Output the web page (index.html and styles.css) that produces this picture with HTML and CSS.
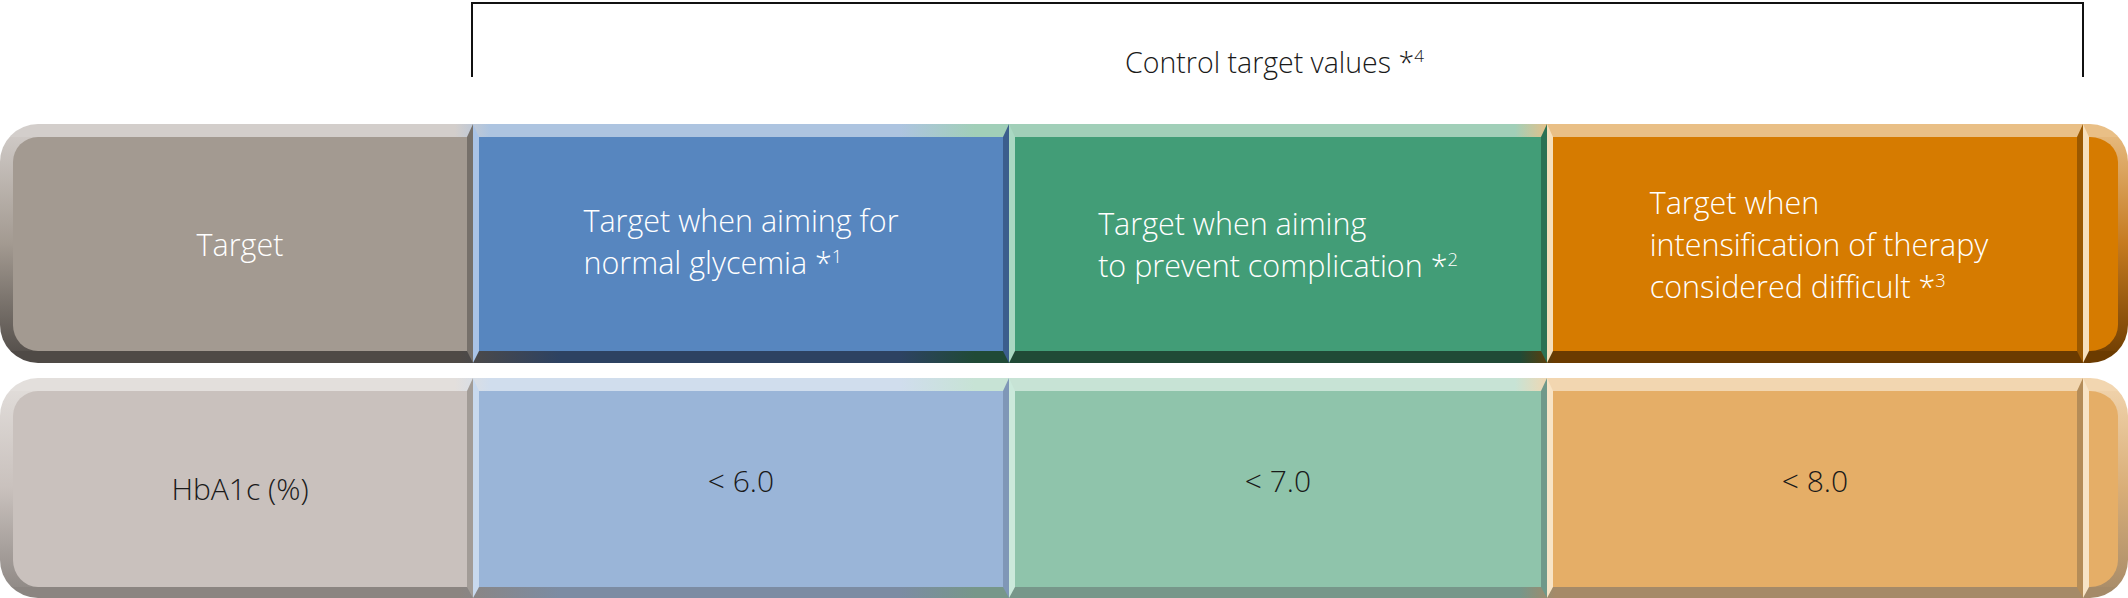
FILE: index.html
```html
<!DOCTYPE html>
<html>
<head>
<meta charset="utf-8">
<link rel="stylesheet" href="styles.css">
</head>
<body>
<div class="page">
  <div class="bracket"><div class="bracket-label">Control target values *<sup>4</sup></div></div>
  <div class="bar bar-top">
    <div class="cell first gray"><div class="label">Target</div></div>
    <div class="cell blue"><div class="label up">Target when aiming for<br>normal glycemia *<sup>1</sup></div></div>
    <div class="cell green"><div class="label">Target when aiming<br>to prevent complication *<sup>2</sup></div></div>
    <div class="cell orange"><div class="label shift">Target when<br>intensification of therapy<br>considered difficult *<sup>3</sup></div></div>
    <div class="cell cap orange"></div>
  </div>
  <div class="bar bar-bottom">
    <div class="cell first gray"><div class="value low">HbA1c (%)</div></div>
    <div class="cell blue"><div class="value">&lt; 6.0</div></div>
    <div class="cell green"><div class="value">&lt; 7.0</div></div>
    <div class="cell orange"><div class="value">&lt; 8.0</div></div>
    <div class="cell cap orange"></div>
  </div>
</div>
</body>
</html>
```
FILE: styles.css
```css
html, body {
  margin: 0;
  padding: 0;
  background: #ffffff;
}
body {
  width: 2128px;
  height: 598px;
  overflow: hidden;
  font-family: "Open Sans", "Segoe UI", "DejaVu Sans", sans-serif;
  font-weight: 300;
}
sup {
  font-size: 0.6em;
  vertical-align: 0.62em;
  line-height: 0;
}
.bracket {
  box-sizing: border-box;
  margin: 2px 0 0 471px;
  width: 1613px;
  height: 75px;
  border: 2px solid #111111;
  border-bottom: none;
  display: flex;
  justify-content: center;
}
.bracket-label {
  padding-top: 43px;
  font-size: 28.5px;
  line-height: 30px;
  color: #1a1a1a;
  white-space: nowrap;
  height: 0;
  margin-right: 6px;
}
.bar {
  display: grid;
  grid-template-columns: 473px 536px 538px 536px 1fr;
  border-radius: 38px;
  overflow: hidden;
  background-repeat: no-repeat;
}
.bar-top {
  margin-top: 47px;
  height: 239px;
  background:
    linear-gradient(to right, #d3cecb 455px, #adc4e0 490px, #adc4e0 900px, #a1cfb8 975px, #a1cfb8 1515px, #e9bf86 1550px) top / 100% 13px no-repeat,
    linear-gradient(to right, #4f4a46 460px, #2d4262 560px, #2d4262 900px, #204a36 975px, #204a36 1520px, #6b3b00 1555px) bottom / 100% 12px no-repeat,
    linear-gradient(#d3cecb, #a39a91 50%, #4f4a46) left / 60px 100% no-repeat,
    linear-gradient(#e9bf86, #c57a20 50%, #6b3b00) right / 60px 100% no-repeat;
}
.bar-bottom {
  margin-top: 15px;
  height: 220px;
  background:
    linear-gradient(to right, #e3dfdc 455px, #d0dded 490px, #d0dded 900px, #c7e3d5 975px, #c7e3d5 1515px, #f2d6b0 1550px) top / 100% 13px no-repeat,
    linear-gradient(to right, #8b8581 460px, #7c8ca3 560px, #7c8ca3 900px, #77978a 975px, #77978a 1520px, #a58a68 1555px) bottom / 100% 11px no-repeat,
    linear-gradient(#e3dfdc, #c9c1bd 50%, #8b8581) left / 60px 100% no-repeat,
    linear-gradient(#f2d6b0, #d9ae78 50%, #a58a68) right / 60px 100% no-repeat;
}
.cell {
  box-sizing: border-box;
  border-style: solid;
  border-width: 13px 6px 12px 6px;
  border-color: transparent var(--shade) transparent var(--tint);
  background: var(--face);
  background-clip: padding-box;
  display: flex;
  align-items: center;
  justify-content: center;
  min-width: 0;
}
.bar-bottom .cell {
  border-bottom-width: 11px;
}
.cell.first {
  border-left: 13px solid transparent;
  border-radius: 38px 0 0 38px;
}
.cell.cap {
  border-right: 10px solid transparent;
  border-radius: 0 38px 38px 0;
}
.bar-top .gray { --face: #a39a91; --shade: #76706a; --tint: #cfcac6; }
.bar-top .blue { --face: #5786bf; --shade: #3b5e8d; --tint: #a9c3e6; }
.bar-top .green { --face: #429d77; --shade: #2c7254; --tint: #aad8c2; }
.bar-top .orange { --face: #d67b00; --shade: #9a5800; --tint: #f6dfbb; }
.bar-bottom .gray { --face: #c9c1bd; --shade: #a29c97; --tint: #e3dfdc; }
.bar-bottom .blue { --face: #9ab5d8; --shade: #7f97b7; --tint: #c8d9ee; }
.bar-bottom .green { --face: #8fc4ab; --shade: #70998a; --tint: #cbe9db; }
.bar-bottom .orange { --face: #e5ae67; --shade: #b48c58; --tint: #f8e4c6; }
.label {
  color: #ffffff;
  font-size: 30.5px;
  line-height: 42px;
  text-align: left;
  white-space: nowrap;
}
.label.up {
  margin-bottom: 6px;
}
.label.shift {
  margin-right: -8px;
}
.value {
  color: #1a1a1a;
  font-size: 30px;
  line-height: 36px;
  margin-bottom: 16px;
}
.value.low {
  margin-bottom: 0;
}
```
